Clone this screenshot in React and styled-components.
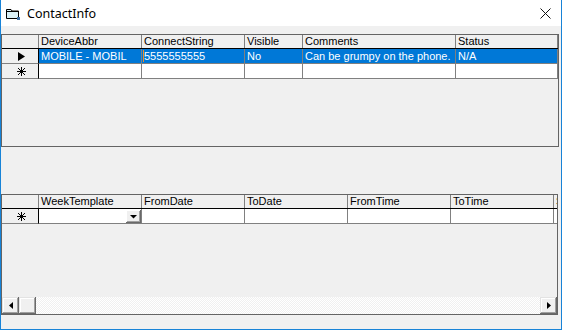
import React from "react";
import styled, { createGlobalStyle } from "styled-components";

const GlobalStyle = createGlobalStyle`
  html, body {
    margin: 0;
    padding: 0;
    background: #f0f0f0;
  }
  * {
    box-sizing: border-box;
  }
`;

const topColumns = [
  { key: "device", title: "DeviceAbbr", width: 103 },
  { key: "connect", title: "ConnectString", width: 103 },
  { key: "visible", title: "Visible", width: 58 },
  { key: "comments", title: "Comments", width: 153 },
  { key: "status", title: "Status", width: 0 },
];

const topRows = [
  {
    device: "MOBILE - MOBIL",
    connect: "5555555555",
    visible: "No",
    comments: "Can be grumpy on the phone.",
    status: "N/A",
  },
];

const bottomColumns = [
  { key: "week", title: "WeekTemplate", width: 103, combo: true },
  { key: "fromDate", title: "FromDate", width: 103 },
  { key: "toDate", title: "ToDate", width: 103 },
  { key: "fromTime", title: "FromTime", width: 103 },
  { key: "toTime", title: "ToTime", width: 103 },
  { key: "sunday", title: "S", width: 60 },
];

const Arrow = ({ dir }) => (
  <svg width="7" height="9" viewBox="0 0 7 9">
    {dir === "right" ? (
      <path d="M0 0 L7 4.5 L0 9 Z" fill="#000" />
    ) : (
      <path d="M7 0 L0 4.5 L7 9 Z" fill="#000" />
    )}
  </svg>
);

const SmallArrow = ({ dir }) => (
  <svg width="4" height="7" viewBox="0 0 4 7">
    {dir === "right" ? (
      <path d="M0 0 L4 3.5 L0 7 Z" fill="#000" />
    ) : (
      <path d="M4 0 L0 3.5 L4 7 Z" fill="#000" />
    )}
  </svg>
);

const NewRowMark = () => (
  <svg width="9" height="9" viewBox="0 0 9 9">
    <g stroke="#000" strokeWidth="1" shapeRendering="crispEdges">
      <line x1="4.5" y1="0" x2="4.5" y2="9" />
      <line x1="0" y1="4.5" x2="9" y2="4.5" />
      <line x1="1" y1="1" x2="8" y2="8" />
      <line x1="8" y1="1" x2="1" y2="8" />
    </g>
  </svg>
);

const WindowIcon = () => (
  <svg width="16" height="14" viewBox="0 0 16 14">
    <path d="M1.5 2.5 H6 L7 4 H13.5 V11.5 H1.5 Z" fill="#d9f0f7" stroke="#000" />
    <path d="M1.5 4.5 H13.5" stroke="#000" />
    <rect x="12" y="10" width="3" height="3" fill="#3a6ea5" />
  </svg>
);

const CloseIcon = () => (
  <svg width="11" height="11" viewBox="0 0 11 11">
    <path d="M0.5 0.5 L10.5 10.5 M10.5 0.5 L0.5 10.5" stroke="#111" strokeWidth="1" />
  </svg>
);

const App = () => {
  return (
    <>
      <GlobalStyle />
      <Window>
        <TitleBar>
          <WindowIcon />
          <Title>ContactInfo</Title>
          <CloseButton>
            <CloseIcon />
          </CloseButton>
        </TitleBar>
        <Body>
          <Grid $height={113} $gapRight={2}>
            <HeaderRow>
              <SelectorCell $header />
              {topColumns.map((c) => (
                <HeaderCell key={c.key} $width={c.width}>
                  {c.title}
                </HeaderCell>
              ))}
            </HeaderRow>
            {topRows.map((r, i) => (
              <Row key={i}>
                <SelectorCell>
                  <Arrow dir="right" />
                </SelectorCell>
                {topColumns.map((c, j) => (
                  <Cell key={c.key} $width={c.width} $selected>
                    {j === 1 && <Caret />}
                    {r[c.key]}
                  </Cell>
                ))}
              </Row>
            ))}
            <Row>
              <SelectorCell>
                <NewRowMark />
              </SelectorCell>
              {topColumns.map((c) => (
                <Cell key={c.key} $width={c.width} />
              ))}
            </Row>
          </Grid>

          <Grid $height={121} $gapRight={3} $top={47}>
            <HeaderRow>
              <SelectorCell $header />
              {bottomColumns.map((c) => (
                <HeaderCell key={c.key} $width={c.width}>
                  {c.title}
                </HeaderCell>
              ))}
            </HeaderRow>
            <Row>
              <SelectorCell>
                <NewRowMark />
              </SelectorCell>
              {bottomColumns.map((c) => (
                <Cell key={c.key} $width={c.width}>
                  {c.combo && (
                    <ComboButton>
                      <svg width="7" height="5" viewBox="0 0 7 5">
                        <path d="M0 1 H7 L3.5 4.5 Z" fill="#000" />
                      </svg>
                    </ComboButton>
                  )}
                </Cell>
              ))}
            </Row>
            <Spacer />
            <ScrollBar>
              <ScrollButton>
                <SmallArrow dir="left" />
              </ScrollButton>
              <ScrollButton />
              <Track />
              <ScrollButton>
                <SmallArrow dir="right" />
              </ScrollButton>
            </ScrollBar>
          </Grid>
        </Body>
      </Window>
    </>
  );
};

const Window = styled.div`
  width: 562px;
  height: 330px;
  display: flex;
  flex-direction: column;
  background: #f0f0f0;
  border: 1px solid #1883d7;
  border-top: none;
  overflow: hidden;
`;

const TitleBar = styled.div`
  height: 26px;
  flex: none;
  display: flex;
  align-items: center;
  background: #fff;
  padding-left: 4px;
  padding-top: 1px;
`;

const Title = styled.span`
  margin-left: 6px;
  font-family: "Noto Sans", "Open Sans", sans-serif;
  font-size: 12.5px;
  color: #000;
`;

const CloseButton = styled.div`
  margin-left: auto;
  width: 32px;
  height: 25px;
  display: flex;
  align-items: center;
  justify-content: center;
`;

const Body = styled.div`
  flex: 1;
  display: flex;
  flex-direction: column;
  padding-top: 8px;
`;

const Grid = styled.div`
  height: ${(p) => p.$height}px;
  margin-right: ${(p) => p.$gapRight}px;
  margin-top: ${(p) => p.$top || 0}px;
  flex: none;
  display: flex;
  flex-direction: column;
  border: 1px solid #646464;
  background: #f0f0f0;
  overflow: hidden;
  font-family: "Liberation Sans", Arial, sans-serif;
  font-size: 11px;
  color: #000;
`;

const HeaderRow = styled.div`
  display: flex;
  height: 14px;
  flex: none;
  border-bottom: 1px solid #000;
`;

const Row = styled.div`
  display: flex;
  height: 15px;
  flex: none;
`;

const SelectorCell = styled.div`
  width: 37px;
  flex: none;
  display: flex;
  align-items: center;
  justify-content: center;
  padding-left: 2px;
  background: #f0f0f0;
  border-right: 1px solid ${(p) => (p.$header ? "#808080" : "#000")};
  border-bottom: ${(p) => (p.$header ? "none" : "1px solid #808080")};
`;

const HeaderCell = styled.div`
  width: ${(p) => (p.$width ? `${p.$width}px` : "auto")};
  flex: ${(p) => (p.$width ? "none" : "1")};
  padding-left: 2px;
  line-height: 13px;
  white-space: nowrap;
  overflow: hidden;
  background: #f0f0f0;
  border-right: 1px solid #808080;
`;

const Cell = styled.div`
  width: ${(p) => (p.$width ? `${p.$width}px` : "auto")};
  flex: ${(p) => (p.$width ? "none" : "1")};
  display: flex;
  align-items: center;
  padding-left: 2px;
  line-height: 14px;
  white-space: nowrap;
  overflow: hidden;
  background: ${(p) => (p.$selected ? "#0078d7" : "#fff")};
  color: ${(p) => (p.$selected ? "#fff" : "#000")};
  border-right: 1px solid #808080;
  border-bottom: 1px solid #808080;
`;

const Caret = styled.span`
  width: 1px;
  height: 12px;
  background: #f08c28;
  margin-left: -1px;
  flex: none;
`;

const ComboButton = styled.div`
  margin-left: auto;
  width: 15px;
  height: 13px;
  flex: none;
  display: flex;
  align-items: center;
  justify-content: center;
  background: #f0f0f0;
  box-shadow: inset -1px -1px #696969, inset 1px 1px #fff, inset -2px -2px #a0a0a0;
`;

const Spacer = styled.div`
  flex: 1;
`;

const ScrollBar = styled.div`
  height: 17px;
  flex: none;
  display: flex;
`;

const ScrollButton = styled.div`
  width: 17px;
  height: 17px;
  flex: none;
  display: flex;
  align-items: center;
  justify-content: center;
  background: #f0f0f0;
  box-shadow: inset -1px -1px #696969, inset 1px 1px #e3e3e3, inset -2px -2px #a0a0a0,
    inset 2px 2px #fff;
`;

const Track = styled.div`
  flex: 1;
  background-color: #f0f0f0;
  background-image: repeating-conic-gradient(#fff 0 25%, #f0f0f0 0 50%);
  background-size: 2px 2px;
`;

export default App;
